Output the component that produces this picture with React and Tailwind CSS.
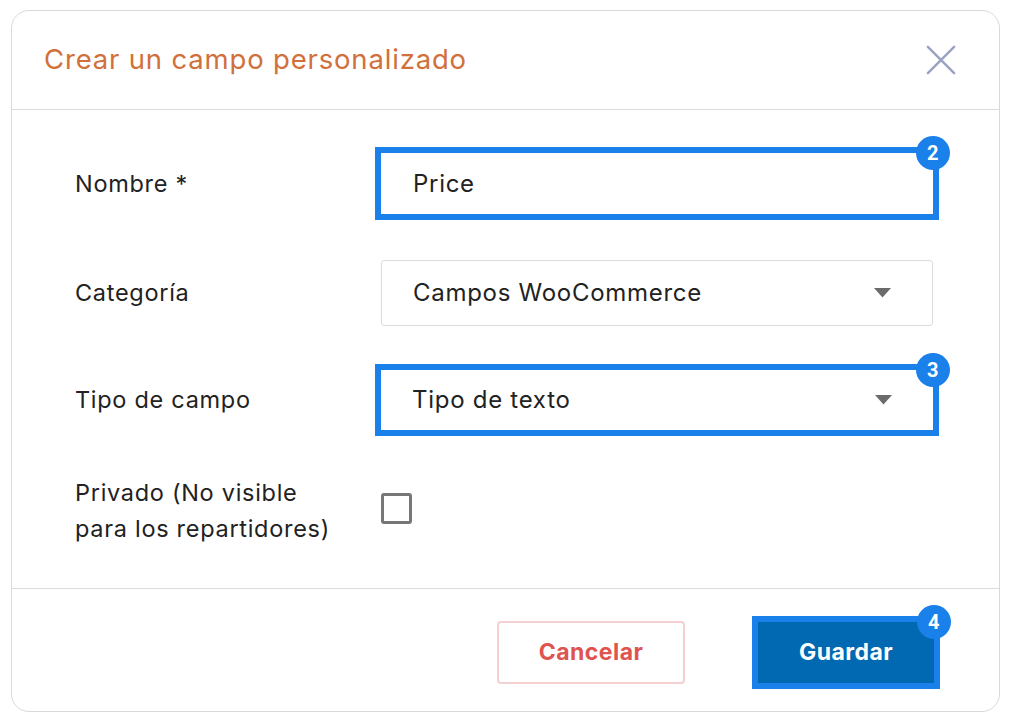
import { useState } from 'react'

const font = { fontFamily: 'Inter, "Open Sans", sans-serif' }

function Badge({ n }) {
  return (
    <span
      className="absolute -right-[17px] -top-[17px] z-10 flex h-[34px] w-[34px] items-center justify-center rounded-full bg-[#1a80ea] text-[20px] font-bold leading-none text-white"
      style={{ fontFamily: 'Roboto, sans-serif' }}
    >
      {n}
    </span>
  )
}

function Highlight({ n, children }) {
  return (
    <div className="relative">
      {children}
      <div className="pointer-events-none absolute -inset-[6px] border-[6px] border-[#1a80ea]" />
      <Badge n={n} />
    </div>
  )
}

function Caret() {
  return (
    <svg width="17" height="10" viewBox="0 0 17 10" className="shrink-0">
      <path d="M0 0 L17 0 L8.5 9.5 Z" fill="#6b6b6b" />
    </svg>
  )
}

function SelectBox({ value, className }) {
  return (
    <div
      className={`flex w-[552px] items-center justify-between rounded-[3px] border border-[#dcdcdc] bg-white pl-[31px] pr-[41px] text-[24px] tracking-[0.03em] text-[#222] ${className}`}
    >
      <span>{value}</span>
      <Caret />
    </div>
  )
}

export default function App() {
  const [nombre, setNombre] = useState('Price')
  const [privado, setPrivado] = useState(false)

  return (
    <div className="h-[724px] w-[1012px] overflow-hidden bg-white pt-[10px] pl-[11px]" style={font}>
      <div className="flex h-[702px] w-[989px] flex-col rounded-[18px] border border-[#d9d9d9] bg-white">
        <div className="flex h-[99px] shrink-0 items-center justify-between border-b border-[#dcdcdc] pl-[32px] pr-[43px]">
          <h1 className="text-[27.5px] font-normal tracking-[0.03em] text-[#d1703b]">Crear un campo personalizado</h1>
          <button type="button" className="flex h-[30px] w-[30px] items-center justify-center">
            <svg width="32" height="32" viewBox="0 0 32 32">
              <path d="M2 2 L30 30 M30 2 L2 30" stroke="#9ba3c3" strokeWidth="2.6" strokeLinecap="round" />
            </svg>
          </button>
        </div>

        <div className="shrink-0 pt-[40px] pb-[47px] pl-[63px] text-[23.5px] tracking-[0.03em] text-[#222]">
          <div className="grid h-[66px] grid-cols-[306px_552px] items-center">
            <label className="pt-[2px]">Nombre *</label>
            <Highlight n="2">
              <input
                className="block h-[61px] w-[552px] bg-white pl-[32px] text-[24px] outline-none"
                value={nombre}
                onChange={(e) => setNombre(e.target.value)}
              />
            </Highlight>
          </div>

          <div className="mt-[44px] grid h-[66px] grid-cols-[306px_552px] items-center">
            <label>Categoría</label>
            <SelectBox value="Campos WooCommerce" className="h-[66px]" />
          </div>

          <div className="mt-[41px] grid h-[66px] grid-cols-[306px_552px] items-center">
            <label>Tipo de campo</label>
            <Highlight n="3">
              <SelectBox value="Tipo de texto" className="h-[60px] rounded-none border-0" />
            </Highlight>
          </div>

          <div className="mt-[42px] grid h-[66px] grid-cols-[306px_552px] items-center">
            <label className="leading-[36px]">
              Privado (No visible
              <br />
              para los repartidores)
            </label>
            <button
              type="button"
              onClick={() => setPrivado(!privado)}
              className="mb-[6px] h-[31px] w-[31px] rounded-[3px] border-[3px] border-[#777]"
            />
          </div>
        </div>

        <div className="flex flex-1 items-center justify-end gap-[73px] border-t border-[#dcdcdc] pt-[5px] pr-[65px] text-[23px] font-bold tracking-[0.02em]">
          <button
            type="button"
            className="h-[63px] w-[188px] rounded-[4px] border-2 border-[#f4d0d0] bg-white text-[#df5350]"
          >
            Cancelar
          </button>
          <Highlight n="4">
            <button type="button" className="block h-[61px] w-[176px] bg-[#0069b1] text-white">
              Guardar
            </button>
          </Highlight>
        </div>
      </div>
    </div>
  )
}
